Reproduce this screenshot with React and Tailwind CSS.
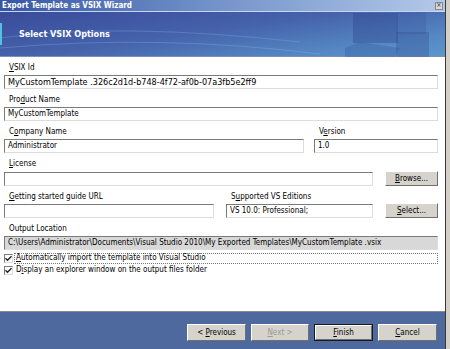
import React from 'react';

const font = { fontFamily: '"DejaVu Sans Condensed", "DejaVu Sans", sans-serif' };

function U({ children }) {
  return <span className="underline underline-offset-1">{children}</span>;
}

function Label({ children, className = '' }) {
  return <div className={`h-[18px] flex items-end pb-[3px] pl-[5px] text-[8px] text-black leading-none ${className}`}>{children}</div>;
}

function Field({ value, className = '', gray = false }) {
  return (
    <div
      className={`h-[14px] border border-t-[#7a7a7a] border-l-[#7a7a7a] border-b-[#dcdcdc] border-r-[#dcdcdc] flex items-center pl-[3px] leading-none text-black whitespace-nowrap overflow-hidden ${gray ? 'bg-[#d8d8d8]' : 'bg-white'} ${className || 'text-[8px]'}`}
    >
      {value}
    </div>
  );
}

function Btn({ children, className = '', disabled = false, def = false }) {
  return (
    <div className={`${def ? 'border border-[#1a1a1a]' : ''} ${className}`}>
      <div
        className={`h-full flex items-center justify-center bg-[#d6d3cc] border border-t-white border-l-white border-b-[#6f6f6f] border-r-[#6f6f6f] text-[8px] leading-none ${disabled ? 'text-[#9a9a9a]' : 'text-black'}`}
      >
        {children}
      </div>
    </div>
  );
}

function Check({ children, focus = false }) {
  return (
    <div className="flex items-center h-[12px] pl-[4px] text-[8px] leading-none">
      <div className="w-[9px] h-[9px] bg-white border border-t-[#7a7a7a] border-l-[#7a7a7a] border-b-[#dcdcdc] border-r-[#dcdcdc] flex items-center justify-center">
        <svg width="7" height="7" viewBox="0 0 7 7">
          <path d="M0.5 3.3 L2.5 5.3 L6.5 1.3" stroke="#222" strokeWidth="1.4" fill="none" />
        </svg>
      </div>
      <div className={`ml-[1px] h-[11px] flex items-center pl-[1px] ${focus ? 'w-[430px] border border-dotted border-[#777]' : 'border border-transparent'}`}>
        {children}
      </div>
    </div>
  );
}

export default function App() {
  return (
    <div className="w-[450px] h-[349px] flex overflow-hidden bg-[#d4d0c8]" style={font}>
      <div className="w-[445px] h-full flex flex-col bg-white">
        {/* Title bar */}
        <div className="h-[12px] flex items-center justify-between pl-[2px] pr-[2px] bg-[linear-gradient(90deg,#3656a6_0%,#6f8fc8_45%,#b3c9e9_100%)] border-b border-[#c8d6ee]">
          <span className="text-[8px] font-bold text-white leading-none">Export Template as VSIX Wizard</span>
          <div className="w-[8px] h-[8px] bg-[#d8d8d8] border border-[#888] flex items-center justify-center text-[7px] leading-none text-[#333]">×</div>
        </div>

        {/* Header banner */}
        <div className="relative h-[45px] flex items-center pl-[19px] bg-[linear-gradient(172deg,#3a4c9b_0%,#4562ab_45%,#5588c4_80%,#5d96cd_100%)] border-b border-[#7d8fb5]">
          <svg className="absolute left-0 top-0" width="445" height="45" viewBox="0 0 445 45">
            <rect x="0" y="11" width="2" height="22" fill="#4fc3e0" />
            <path d="M0 26 Q120 10 300 30" stroke="#7fb0e0" strokeOpacity="0.35" strokeWidth="1" fill="none" />
            <path d="M0 36 Q160 22 320 42" stroke="#8fc0ea" strokeOpacity="0.3" strokeWidth="1" fill="none" />
            <rect x="353" y="1" width="45" height="30" fill="#2c3f86" fillOpacity="0.35" />
            <rect x="396" y="0" width="30" height="22" fill="#3c55a0" fillOpacity="0.3" />
            <rect x="396" y="20" width="33" height="25" fill="#2e4588" fillOpacity="0.3" />
            <path d="M345 36 L360 30 L400 36 L395 45 L345 45 Z" fill="#3a5ea6" fillOpacity="0.4" />
          </svg>
          <span className="relative text-[9px] font-bold text-white leading-none">Select VSIX Options</span>
        </div>

        {/* Body */}
        <div className="flex-1 flex flex-col pr-[7px] pl-[4px]">
          <Label className="pl-[1px]"><span><U>V</U>SIX Id</span></Label>
          <Field value="MyCustomTemplate .326c2d1d-b748-4f72-af0b-07a3fb5e2ff9" className="text-[9px]" />

          <Label className="pl-[1px]"><span>Pro<U>d</U>uct Name</span></Label>
          <Field value="MyCustomTemplate" />

          <div className="flex">
            <div className="w-[300px]">
              <Label className="pl-[1px]"><span>C<U>o</U>mpany Name</span></Label>
              <Field value="Administrator" />
            </div>
            <div className="ml-[10px] flex-1">
              <Label className="pl-[1px]"><span>V<U>e</U>rsion</span></Label>
              <Field value="1.0" />
            </div>
          </div>

          <Label className="pl-[1px]"><span><U>L</U>icense</span></Label>
          <div className="flex items-center">
            <Field value="" className="w-[369px]" />
            <Btn className="ml-[12px] w-[53px] h-[15px]"><span><U>B</U>rowse...</span></Btn>
          </div>

          <div className="flex">
            <div className="w-[210px]">
              <Label className="pl-[1px]"><span><U>G</U>etting started guide URL</span></Label>
              <Field value="" />
            </div>
            <div className="ml-[12px] w-[147px]">
              <Label className="pl-[2px]"><span>S<U>u</U>pported VS Editions</span></Label>
              <Field value="VS 10.0: Professional;" />
            </div>
            <div className="ml-[12px] flex-1 flex items-end">
              <Btn className="w-[53px] h-[15px]"><span><U>S</U>elect...</span></Btn>
            </div>
          </div>

          <Label className="pl-[1px]"><span>Output Location</span></Label>
          <Field gray value={'C:\\Users\\Administrator\\Documents\\Visual Studio 2010\\My Exported Templates\\MyCustomTemplate .vsix'} />

          <div className="mt-[2px] -ml-[4px]">
            <Check focus><span><U>A</U>utomatically import the template into Visual Studio</span></Check>
            <Check><span>D<U>i</U>splay an explorer window on the output files folder</span></Check>
          </div>
        </div>

        {/* Footer */}
        <div className="h-[38px] border-t border-[#8a8a8a] bg-[#4d699d] flex items-start justify-end pt-[12px] pr-[8px] gap-[5px]">
          <Btn className="w-[59px] h-[17px]"><span>&lt; <U>P</U>revious</span></Btn>
          <Btn disabled className="w-[58px] h-[17px]"><span><U>N</U>ext &gt;</span></Btn>
          <Btn def className="w-[59px] h-[17px]"><span><U>F</U>inish</span></Btn>
          <Btn className="w-[59px] h-[17px]"><span><U>C</U>ancel</span></Btn>
        </div>
      </div>
      <div className="w-[1px] h-full bg-[#3a3a3a]" />
    </div>
  );
}
